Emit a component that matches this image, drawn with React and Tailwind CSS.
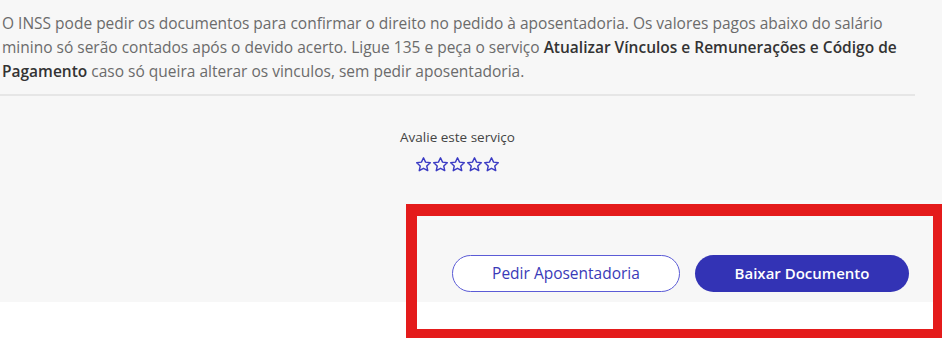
import React from "react";

function Star() {
  return (
    <svg width="17" height="17" viewBox="0 0 24 24" fill="none" stroke="#3b3bc4" strokeWidth="2" strokeLinejoin="round">
      <path d="M12 2.5l2.9 6.2 6.7.8-5 4.6 1.4 6.6L12 17.4l-6 3.3 1.4-6.6-5-4.6 6.7-.8z" />
    </svg>
  );
}

export default function App() {
  return (
    <div className="relative w-[942px] h-[342px] bg-white overflow-hidden" style={{ fontFamily: "'Open Sans', Lato, sans-serif" }}>
      <div className="bg-[#f7f7f7] h-[302px] w-full">
        <div className="w-[915px]">
          <p className="pt-[11px] pl-[2px] text-[15.5px] leading-[24px] text-[#6b6b6b] whitespace-nowrap">
            O INSS pode pedir os documentos para confirmar o direito no pedido à aposentadoria. Os valores pagos abaixo do salário
            <br />
            minino só serão contados após o devido acerto. Ligue 135 e peça o serviço{" "}
            <span className="font-semibold text-[#333]">Atualizar Vínculos e Remunerações e Código de</span>
            <br />
            <span className="font-semibold text-[#333]">Pagamento</span> caso só queira alterar os vinculos, sem pedir aposentadoria.
          </p>
          <div className="mt-[11px] h-[2px] bg-[#e6e6e6]" />
          <div className="flex flex-col items-center mt-[33px]">
            <div className="text-[13.5px] leading-[16px] text-[#444]">Avalie este serviço</div>
            <div className="flex gap-[0px] mt-[11px]">
              <Star />
              <Star />
              <Star />
              <Star />
              <Star />
            </div>
          </div>
          <div className="flex justify-end gap-[15px] pr-[6px] mt-[82px]">
            <button className="w-[228px] h-[37px] rounded-full border-[1.5px] border-[#5b5bd6] bg-white text-[15.5px] text-[#3a3ab8]">
              Pedir Aposentadoria
            </button>
            <button className="w-[214px] h-[37px] rounded-full bg-[#3333b5] text-[15px] font-semibold text-white">
              Baixar Documento
            </button>
          </div>
        </div>
      </div>
      <div className="absolute left-[406px] top-[204px] w-[540px] h-[134px] border-t-[12px] border-l-[11px] border-r-[13px] border-b-[9px] border-[#e41b1b] pointer-events-none" />
    </div>
  );
}
